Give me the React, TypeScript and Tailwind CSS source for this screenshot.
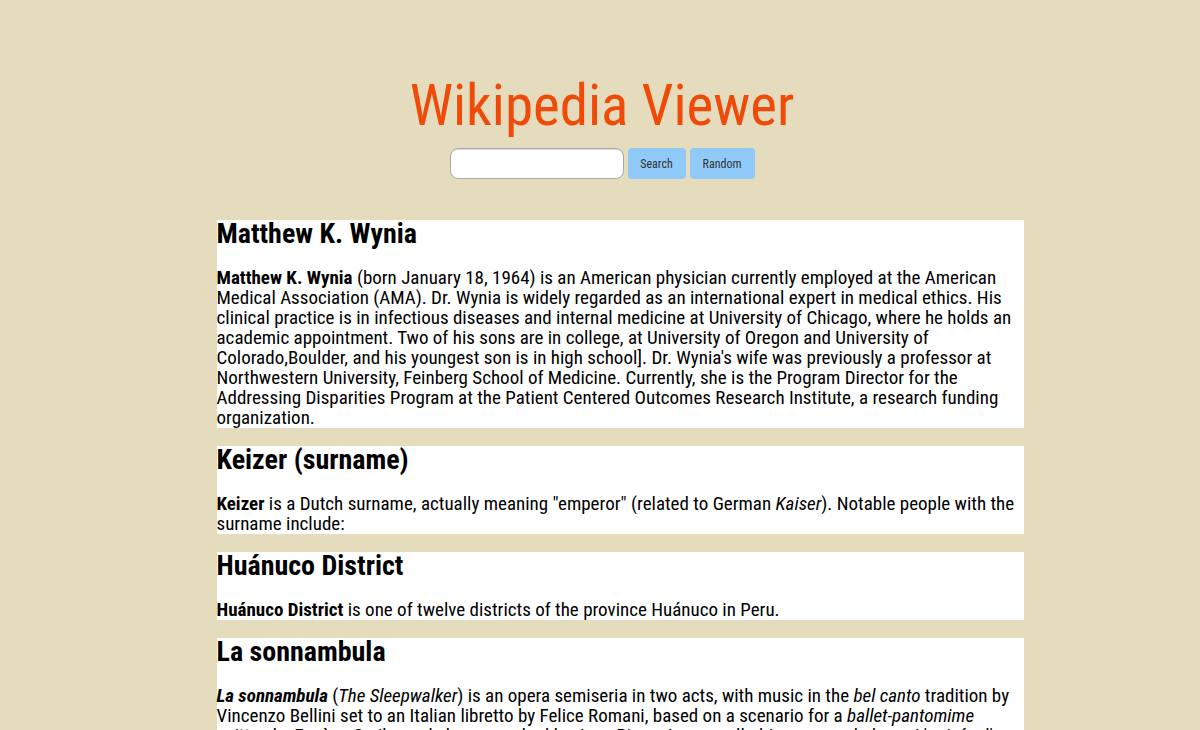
const cards = [
  {
    title: "Matthew K. Wynia",
    body: (
      <>
        <b>Matthew K. Wynia</b> (born January 18, 1964) is an American physician currently employed at the American
        Medical Association (AMA). Dr. Wynia is widely regarded as an international expert in medical ethics. His
        clinical practice is in infectious diseases and internal medicine at University of Chicago, where he holds an
        academic appointment. Two of his sons are in college, at University of Oregon and University of
        Colorado,Boulder, and his youngest son is in high school]. Dr. Wynia's wife was previously a professor at
        Northwestern University, Feinberg School of Medicine. Currently, she is the Program Director for the
        Addressing Disparities Program at the Patient Centered Outcomes Research Institute, a research funding
        organization.
      </>
    ),
  },
  {
    title: "Keizer (surname)",
    body: (
      <>
        <b>Keizer</b> is a Dutch surname, actually meaning "emperor" (related to German <i>Kaiser</i>). Notable people
        with the surname include:
      </>
    ),
  },
  {
    title: "Huánuco District",
    body: (
      <>
        <b>Huánuco District</b> is one of twelve districts of the province Huánuco in Peru.
      </>
    ),
  },
  {
    title: "La sonnambula",
    body: (
      <>
        <b>
          <i>La sonnambula</i>
        </b>{" "}
        (<i>The Sleepwalker</i>) is an opera semiseria in two acts, with music in the <i>bel canto</i> tradition by
        Vincenzo Bellini set to an Italian libretto by Felice Romani, based on a scenario for a{" "}
        <i>ballet-pantomime</i> written by Eugène Scribe and choreographed by Jean-Pierre Aumer called <i>La
        somnambule, ou L'arrivée d'un nouveau seigneur</i>.
      </>
    ),
  },
];

export default function App() {
  return (
    <div
      className="min-h-[730px] bg-[#e4dcbd] text-black pb-10"
      style={{ fontFamily: '"Roboto Condensed", "Roboto", sans-serif', fontStretch: "75%" }}
    >
      <header className="flex flex-col items-center pt-[76px] pl-1">
        <h1 className="text-[57px] leading-[60px] text-[#ef4a08] font-normal">Wikipedia Viewer</h1>
        <div className="flex items-center gap-1 mt-[12px]">
          <input
            type="text"
            className="w-[174px] h-[31px] rounded-lg border border-[#aaa] bg-white px-2 outline-none shadow-[inset_0_1px_1px_rgba(0,0,0,0.15)]"
          />
          <button className="h-[31px] w-[58px] rounded-sm bg-[#90caf9] text-[12px] text-[#333]">Search</button>
          <button className="h-[31px] w-[65px] rounded-sm bg-[#90caf9] text-[12px] text-[#333]">Random</button>
        </div>
      </header>

      <main className="w-[847px] pl-10 mx-auto mt-[41px] flex flex-col gap-[18px]">
        {cards.map((c) => (
          <article key={c.title} className="bg-white">
            <h2 className="text-[28px] leading-[28px] font-bold">{c.title}</h2>
            <p className="mt-5 text-[19px] leading-[20px]">{c.body}</p>
          </article>
        ))}
      </main>
    </div>
  );
}
